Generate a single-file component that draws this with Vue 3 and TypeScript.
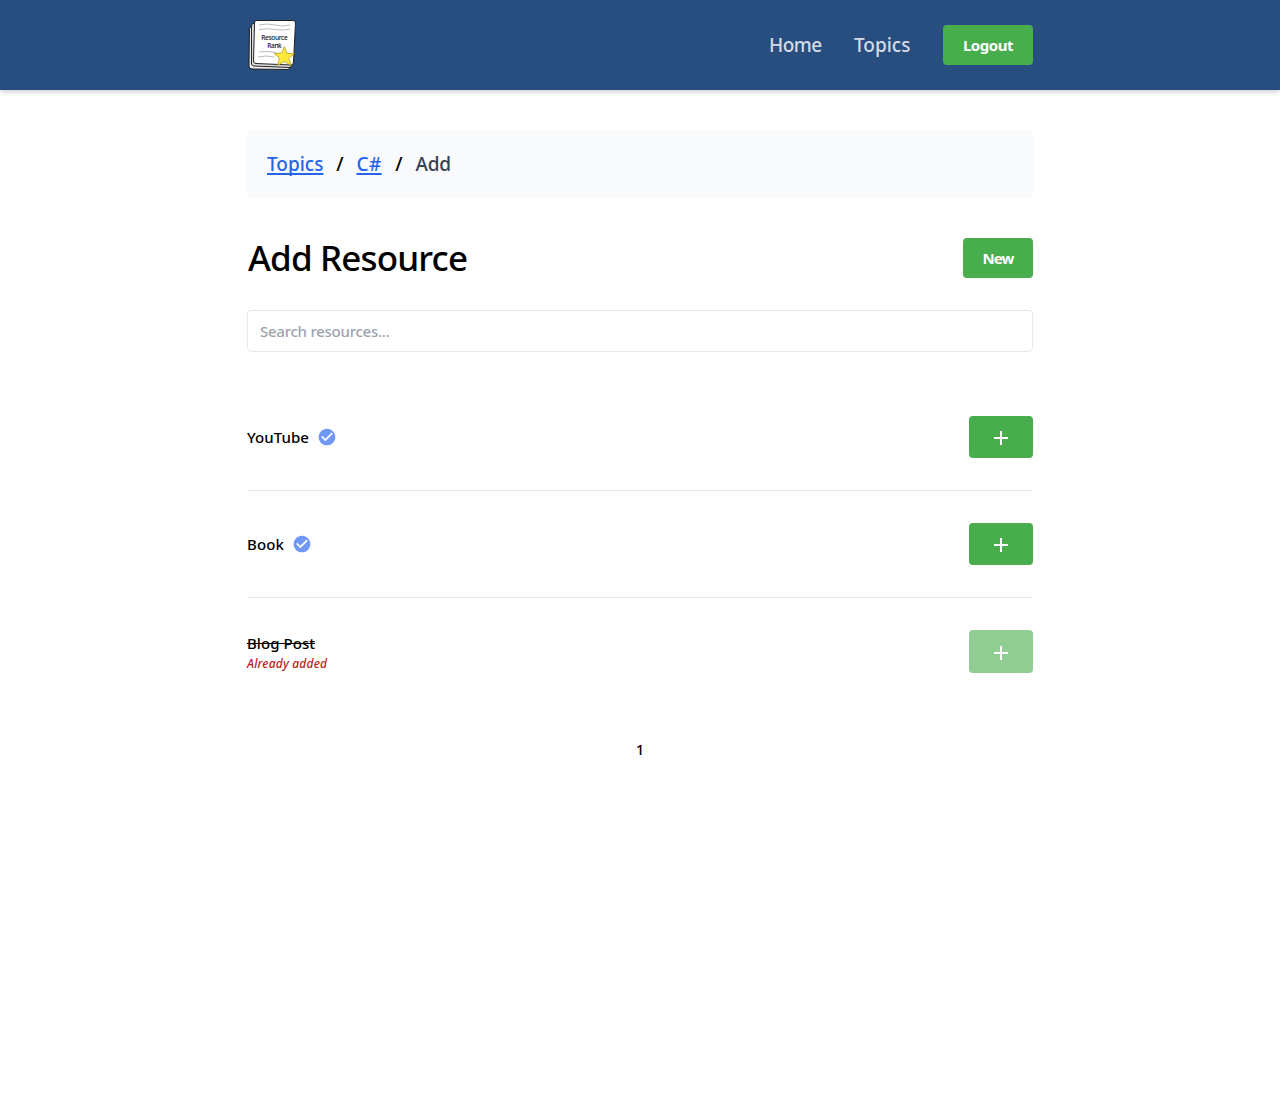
<script setup lang="ts">
interface Resource {
  name: string
  slug: string
  verified: boolean
  added: boolean
}

const resources: Resource[] = [
  { name: 'YouTube', slug: 'youtube', verified: true, added: false },
  { name: 'Book', slug: 'book', verified: true, added: false },
  { name: 'Blog Post', slug: 'blog', verified: false, added: true },
]
</script>

<template>
  <div class="page">
    <header class="header">
      <div class="container header-inner">
        <svg class="logo" viewBox="0 0 50 52" aria-label="Resource Rank">
          <g fill="#fff" stroke="#222" stroke-width="1" stroke-linejoin="round">
            <path fill="#eee" d="M4 8Q2.500 8 2.500 10L2 47Q2 50 5 50L41 50.500L44 48V10Z" />
            <path fill="#ddd" d="M6 4.500Q4.500 5 4.500 8V45Q5 47 7 47L43 48.500L46 45V7Z" />
            <path d="M9 1.500Q7.500 2 7.500 4L6.500 42Q6.500 44.500 9 44.500L44 46Q46.500 46 46.500 43L48.500 4Q48.500 1.500 46 1.500Z" />
          </g>
          <path d="M12 6Q20 4 28 6T43 6M12 10.500Q22 9 29 10.500T43 10M12 33Q20 31.500 29 33.500M11 38Q19 36 27 38" fill="none" stroke="#aaa" stroke-width=".8" />
          <text x="27.500" y="20.500" text-anchor="middle" textLength="26.500">Resource</text>
          <text x="27.500" y="29" text-anchor="middle" textLength="14.500">Rank</text>
          <path d="M37.500 27.500L40 34.500L47.500 34.500L41.800 39.300L44.500 46.500L37.300 42.500L30.500 46.500L32.500 39L27 34.500L34.500 34Z" fill="#fbe83a" stroke="#a79625" stroke-width=".7" />
        </svg>
        <nav class="nav">
          <a class="nav-link home">Home</a>
          <a class="nav-link topics">Topics</a>
          <button class="button logout">Logout</button>
        </nav>
      </div>
    </header>
    <main class="container">
      <div class="breadcrumbs">
        <a class="crumb-topics">Topics</a><span class="slash">/</span><a class="crumb-lang">C#</a><span class="slash">/</span><span class="current">Add</span>
      </div>
      <div class="title-row">
        <h1>Add Resource</h1>
        <button class="button new">New</button>
      </div>
      <input class="search" type="text" placeholder="Search resources..." />
      <ul class="list">
        <li v-for="resource in resources" :key="resource.slug">
          <div>
            <div class="name-row">
              <span class="name" :class="[resource.slug, { added: resource.added }]">{{ resource.name }}</span>
              <svg v-if="resource.verified" class="check" viewBox="0 0 24 24">
                <path fill="#7197f5" d="M12 2C6.480 2 2 6.480 2 12s4.480 10 10 10 10-4.480 10-10S17.520 2 12 2zm-2 15-5-5 1.410-1.410L10 14.170l7.590-7.590L19 8l-9 9z" />
              </svg>
            </div>
            <div v-if="resource.added" class="note">Already added</div>
          </div>
          <button class="button add" :disabled="resource.added" aria-label="Add">
            <svg viewBox="0 0 24 24"><path fill="#fff" d="M19 13h-6v6h-2v-6H5v-2h6V5h2v6h6v2z" /></svg>
          </button>
        </li>
      </ul>
      <div class="pagination">1</div>
    </main>
  </div>
</template>

<style>
body { background: #fff; }
</style>

<style scoped>
.page { font-family: "Noto Sans", sans-serif; font-weight: 500; font-size: 16px; line-height: 24px; color: #000; }
.page * { box-sizing: border-box; }
.container { width: 786px; margin: 0 auto; }
.header { height: 90px; background: #284e80; box-shadow: 0 1px 6px rgba(0, 0, 0, .25); }
.header-inner { height: 90px; display: flex; align-items: center; justify-content: space-between; }
.logo { width: 50px; height: 52px; display: block; }
.logo text { font: 500 6.500px "Noto Sans", sans-serif; fill: #111; }
.nav { display: flex; align-items: center; }
.nav-link { font-size: 19px; line-height: 28px; color: #d4dce6; margin-right: 32px; white-space: nowrap; }
.home { width: 53px; letter-spacing: -.5px; }
.topics { width: 57px; letter-spacing: 0; }
.button { height: 40px; padding: 0; border: 0; border-radius: 4px; background: #48ad4c; color: #fff; font: 700 15px/24px "Noto Sans", sans-serif; display: flex; align-items: center; justify-content: center; flex: none; }
.logout { width: 90px; letter-spacing: -.45px; }
.new { width: 70px; letter-spacing: -.9px; }
.breadcrumbs { margin-top: 40px; height: 68px; border-radius: 4px; padding: 0 20px; background: #f9fafc; display: flex; align-items: center; font-size: 19px; line-height: 28px; white-space: nowrap; }
.breadcrumbs a { color: #2563eb; text-decoration: underline; text-decoration-thickness: 2px; text-underline-offset: 2px; text-decoration-skip-ink: none; }
.crumb-topics { width: 56.500px; letter-spacing: 0; }
.crumb-lang { width: 26px; letter-spacing: .4px; }
.slash { width: 33px; text-align: center; }
.current { color: #374151; letter-spacing: -.2px; }
.title-row { margin-top: 40px; height: 40px; display: flex; align-items: center; justify-content: space-between; }
h1 { margin: 0; padding-left: 1px; font-size: 35px; line-height: 40px; font-weight: 500; letter-spacing: -.85px; white-space: nowrap; }
.search { display: block; width: 100%; height: 42px; margin: 32px 0 0; padding: 0 12px; border: 1px solid #e5e7eb; border-radius: 4px; font: 500 15px/24px "Noto Sans", sans-serif; letter-spacing: -.25px; outline: none; }
.search::placeholder { color: #9ca3af; opacity: 1; }
.list { list-style: none; margin: 32px 0 0; padding: 0; }
.list li { display: flex; align-items: center; justify-content: space-between; padding: 32px 0; border-bottom: 1px solid #e5e7eb; }
.list li:last-child { border-bottom: 0; }
.name-row { display: flex; align-items: center; }
.name { font-size: 15px; white-space: nowrap; letter-spacing: .05px; }
.book { letter-spacing: .15px; }
.added { text-decoration: line-through; }
.check { width: 20px; height: 20px; margin-left: 8px; }
.note { font-size: 12px; line-height: 18px; font-style: italic; color: #b91c1c; letter-spacing: .18px; }
.add { width: 64px; height: 42px; }
.add svg { width: 24px; height: 24px; position: relative; top: 1px; }
.add:disabled { opacity: .6; height: 43px; }
.pagination { margin-top: 32px; text-align: center; font-size: 15px; }
</style>
